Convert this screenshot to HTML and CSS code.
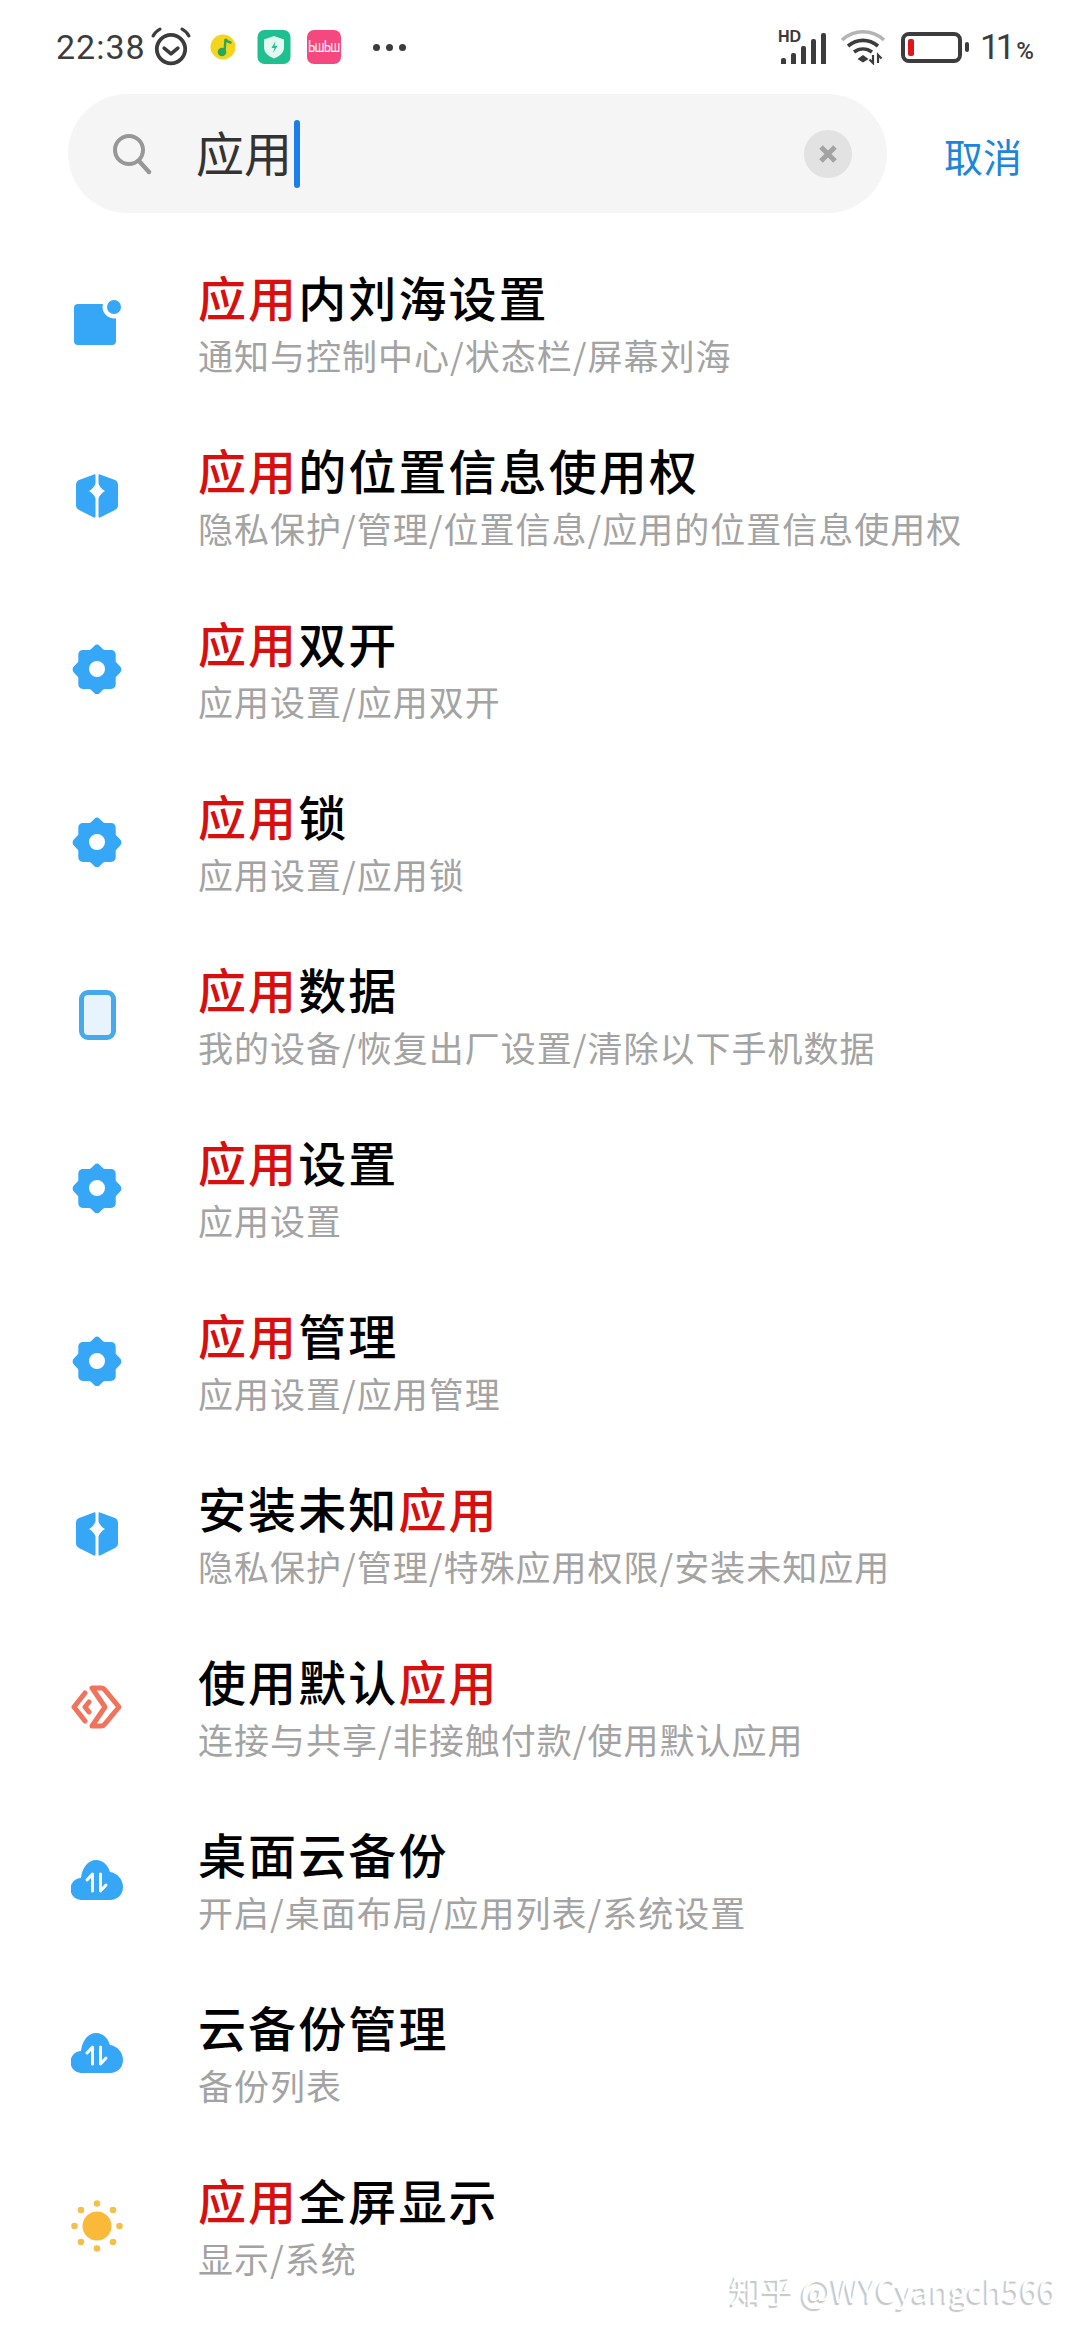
FILE: index.html
```html
<!DOCTYPE html>
<html lang="zh-CN">

<head>
    <meta charset="UTF-8">
    <meta name="viewport" content="width=device-width, initial-scale=1.0">
    <title>设置搜索</title>
    <link rel="stylesheet" href="styles.css">
</head>

<body>
    <svg class="sprites" width="0" height="0">
        <symbol id="icon-gear" viewBox="0 0 50 50">
            <path fill-rule="evenodd" fill="#36a6f7" d="M25 0.5c1 0 1.8 .5 2.5 1.2l3.6 3.6c.5 .5 1 .7 1.7 .7h6.2c2.600 0 4.700 2.100 4.700 4.700v6.200c0 .7 .2 1.200 .7 1.700l3.600 3.600c1.800 1.800 1.800 4.800 0 6.600l-3.600 3.600c-.5 .5-.7 1-.7 1.700v6.200c0 2.600-2.100 4.700-4.700 4.700h-6.200c-.7 0-1.200 .2-1.700 .7l-3.600 3.600c-1.400 1.400-3.600 1.400-5 0l-3.600-3.600c-.5-.5-1-.7-1.700-.7h-6.200c-2.600 0-4.700-2.100-4.700-4.700v-6.200c0-.7-.2-1.200-.7-1.700l-3.600-3.600c-1.800-1.800-1.800-4.800 0-6.600l3.600-3.600c.5-.5 .7-1 .7-1.700v-6.200c0-2.600 2.100-4.700 4.700-4.700h6.200c.7 0 1.200-.2 1.700-.7l3.600-3.600c.7-.7 1.500-1.200 2.500-1.200zM25 17a8 8 0 1 0 0 16a8 8 0 0 0 0-16z" />
        </symbol>
        <symbol id="icon-shield" viewBox="0 0 44 46">
            <path fill="#36a6f7" d="M19 1.500c.8-.4 1.500 0 1.500 1v8c-1 3-3.200 5.500-6.500 7.500c3.300 2 5.500 4.500 6.500 7.500v18c0 1-.7 1.400-1.500 1l-15-7.500c-1.900-1-3-2.600-3-4.700v-20.600c0-2.100 1.100-3.700 3-4.700z" />
            <path fill="#36a6f7" d="M25 1.500c-.8-.4-1.500 0-1.500 1v8c1 3 3.200 5.500 6.500 7.500c-3.300 2-5.500 4.500-6.500 7.500v18c0 1 .7 1.400 1.500 1l15-7.500c1.900-1 3-2.600 3-4.700v-20.600c0-2.100-1.100-3.700-3-4.700z" />
        </symbol>
        <symbol id="icon-cloud" viewBox="0 0 52 40">
            <path fill="#36a6f7" d="M11 40a11 11 0 0 1-1-22C11 8 17 0 25 0C32 0 37 5 39 12C46 13 52 19 52 27C52 35 46 40 39 40z" />
            <path fill="none" stroke="#fff" stroke-width="3" stroke-linecap="round" stroke-linejoin="round" d="M16 20l5.500-6v17M35 25l-5.500 6v-17" />
        </symbol>
    </svg>

    <div class="status-bar">
        <div class="status-left">
            <span class="clock">22:38</span>
            <svg class="ic-alarm" width="40" height="40" viewBox="0 0 38 38">
                <circle cx="19" cy="21" r="13.500" fill="none" stroke="#3c3c3c" stroke-width="3.600" />
                <path d="M12.500 20l6.500 5.500l6.500-5.500" fill="none" stroke="#3c3c3c" stroke-width="3.400" stroke-linecap="round" stroke-linejoin="round" />
                <path d="M2 8.500c1.500-3 3.500-5 6.500-6.500M36 8.500c-1.500-3-3.500-5-6.500-6.500" fill="none" stroke="#3c3c3c" stroke-width="3" stroke-linecap="round" />
            </svg>
            <svg class="ic-music" width="26" height="26" viewBox="0 0 26 26">
                <circle cx="13" cy="13" r="12.500" fill="#f4d51d" />
                <circle cx="12" cy="18" r="4.300" fill="#2aa75c" />
                <path d="M14.500 18l1-13c1 2.500 3 3 5 3.500" fill="none" stroke="#2aa75c" stroke-width="2.400" stroke-linecap="round" />
            </svg>
            <svg class="ic-app" width="34" height="34" viewBox="0 0 33 34">
                <rect width="33" height="34" rx="7" fill="#1fbf8f" />
                <path d="M16.500 6l10 3.500v8c0 5-4 8.500-10 11c-6-2.500-10-6-10-11v-8z" fill="#e3f8f1" />
                <path d="M18 11l-4 7h3l-1.500 5l4.500-7.200h-3z" fill="#1fbf8f" />
            </svg>
            <div class="ic-bili"><span>ЬшЬш</span></div>
            <div class="more-dots"><i></i><i></i><i></i></div>
        </div>
        <div class="status-right">
            <div class="signal">
                <span class="hd">HD</span>
                <div class="bars"><i class="b1"></i><i class="b2"></i><i class="b3"></i><i class="b4"></i><i class="b5"></i></div>
            </div>
            <svg class="ic-wifi" width="46" height="36" viewBox="0 0 46 36">
                <path d="M2 11c12-11 30-11 42 0" fill="none" stroke="#b4b4b4" stroke-width="3.600" />
                <path d="M8 17c9-7.500 21-7.500 30 0" fill="none" stroke="#3c3c3c" stroke-width="3.600" />
                <path d="M14 23c5.500-4 12.500-4 18 0" fill="none" stroke="#3c3c3c" stroke-width="3.600" />
                <path d="M17.500 30l5.500-4l5.500 4l-5.500 3.500z" fill="#3c3c3c" />
                <path d="M33 26v8l-3.500-3.500M38 34v-8l3.500 3.500" fill="none" stroke="#3c3c3c" stroke-width="2.200" />
            </svg>
            <div class="battery"><div class="battery-level"></div></div>
            <div class="battery-tip"></div>
            <span class="battery-num">11<small>%</small></span>
        </div>
    </div>

    <div class="search-row">
        <div class="search-box">
            <svg class="ic-search" width="40" height="44" viewBox="0 0 40 44">
                <circle cx="17" cy="18" r="14" fill="none" stroke="#979797" stroke-width="4" />
                <path d="M27 29l10 11" stroke="#979797" stroke-width="4.400" stroke-linecap="round" />
            </svg>
            <span class="search-text">应用</span>
            <span class="caret"></span>
            <div class="clear-btn">
                <svg width="20" height="20" viewBox="0 0 20 20">
                    <path d="M3 3l14 14M17 3l-14 14" stroke="#a3a3a3" stroke-width="5" />
                </svg>
            </div>
        </div>
        <span class="cancel">取消</span>
    </div>

    <ul class="results">
        <li class="result">
            <div class="result-icon">
                <svg width="47" height="45" viewBox="0 0 47 45">
                    <path fill="#36a6f7" d="M4 4h24.900A11.500 11.500 0 0 0 42 18.300V41a4 4 0 0 1-4 4H4a4 4 0 0 1-4-4V8a4 4 0 0 1 4-4z" />
                    <circle cx="40" cy="7" r="7" fill="#36a6f7" />
                </svg>
            </div>
            <div class="result-text">
                <div class="result-title"><em>应用</em>内刘海设置</div>
                <div class="result-path">通知与控制中心/状态栏/屏幕刘海</div>
            </div>
        </li>
        <li class="result">
            <div class="result-icon"><svg width="44" height="46"><use href="#icon-shield" /></svg></div>
            <div class="result-text">
                <div class="result-title"><em>应用</em>的位置信息使用权</div>
                <div class="result-path">隐私保护/管理/位置信息/应用的位置信息使用权</div>
            </div>
        </li>
        <li class="result">
            <div class="result-icon"><svg width="50" height="50"><use href="#icon-gear" /></svg></div>
            <div class="result-text">
                <div class="result-title"><em>应用</em>双开</div>
                <div class="result-path">应用设置/应用双开</div>
            </div>
        </li>
        <li class="result">
            <div class="result-icon"><svg width="50" height="50"><use href="#icon-gear" /></svg></div>
            <div class="result-text">
                <div class="result-title"><em>应用</em>锁</div>
                <div class="result-path">应用设置/应用锁</div>
            </div>
        </li>
        <li class="result">
            <div class="result-icon"><div class="ic-device"></div></div>
            <div class="result-text">
                <div class="result-title"><em>应用</em>数据</div>
                <div class="result-path">我的设备/恢复出厂设置/清除以下手机数据</div>
            </div>
        </li>
        <li class="result">
            <div class="result-icon"><svg width="50" height="50"><use href="#icon-gear" /></svg></div>
            <div class="result-text">
                <div class="result-title"><em>应用</em>设置</div>
                <div class="result-path">应用设置</div>
            </div>
        </li>
        <li class="result">
            <div class="result-icon"><svg width="50" height="50"><use href="#icon-gear" /></svg></div>
            <div class="result-text">
                <div class="result-title"><em>应用</em>管理</div>
                <div class="result-path">应用设置/应用管理</div>
            </div>
        </li>
        <li class="result">
            <div class="result-icon"><svg width="44" height="46"><use href="#icon-shield" /></svg></div>
            <div class="result-text">
                <div class="result-title">安装未知<em>应用</em></div>
                <div class="result-path">隐私保护/管理/特殊应用权限/安装未知应用</div>
            </div>
        </li>
        <li class="result">
            <div class="result-icon">
                <svg width="52" height="46" viewBox="0 0 52 46">
                    <path d="M21 4h9.500c1.500 0 2.500 .6 3.300 1.800l14.200 17.200l-14.200 17.200c-.8 1.200-1.800 1.800-3.300 1.800h-9.500l13-19l-13-19z" fill="none" stroke="#f2735c" stroke-width="5" stroke-linejoin="round" />
                    <path d="M14 9l-11 14l11 14M18 18l-4 5l4 5" fill="none" stroke="#f2735c" stroke-width="5" stroke-linecap="round" stroke-linejoin="round" />
                </svg>
            </div>
            <div class="result-text">
                <div class="result-title">使用默认<em>应用</em></div>
                <div class="result-path">连接与共享/非接触付款/使用默认应用</div>
            </div>
        </li>
        <li class="result">
            <div class="result-icon"><svg width="52" height="40"><use href="#icon-cloud" /></svg></div>
            <div class="result-text">
                <div class="result-title">桌面云备份</div>
                <div class="result-path">开启/桌面布局/应用列表/系统设置</div>
            </div>
        </li>
        <li class="result">
            <div class="result-icon"><svg width="52" height="40"><use href="#icon-cloud" /></svg></div>
            <div class="result-text">
                <div class="result-title">云备份管理</div>
                <div class="result-path">备份列表</div>
            </div>
        </li>
        <li class="result">
            <div class="result-icon">
                <svg width="52" height="52" viewBox="0 0 52 52">
                    <circle cx="26" cy="26" r="14.500" fill="#fbb93a" />
                    <g fill="#f3c04a">
                        <circle cx="26" cy="3.500" r="3.300" />
                        <circle cx="26" cy="48.500" r="3.300" />
                        <circle cx="3.500" cy="26" r="3.300" />
                        <circle cx="48.500" cy="26" r="3.300" />
                        <circle cx="10" cy="10" r="3.300" />
                        <circle cx="42" cy="10" r="3.300" />
                        <circle cx="10" cy="42" r="3.300" />
                        <circle cx="42" cy="42" r="3.300" />
                    </g>
                </svg>
            </div>
            <div class="result-text">
                <div class="result-title"><em>应用</em>全屏显示</div>
                <div class="result-path">显示/系统</div>
            </div>
        </li>
    </ul>

    <div class="watermark">知乎 @WYCyangch566</div>
</body>

</html>
```

FILE: styles.css
```css
html,
body {
    margin: 0;
    padding: 0;
}

body {
    position: relative;
    width: 1080px;
    height: 2340px;
    overflow: hidden;
    background-color: #fff;
    font-family: "Noto Sans CJK SC", "Noto Sans", sans-serif;
}

.sprites {
    display: block;
    height: 0;
}

/* status bar */
.status-bar {
    display: flex;
    justify-content: space-between;
    align-items: center;
    height: 94px;
    padding: 0 55px 0 56px;
    color: #3c3c3c;
}

.status-left,
.status-right {
    display: flex;
    align-items: center;
}

.clock {
    font-family: Roboto, sans-serif;
    font-size: 34px;
    letter-spacing: 1px;
    line-height: 1;
}

.ic-alarm {
    margin-left: 5px;
}

.ic-music {
    margin-left: 19px;
}

.ic-app {
    margin-left: 21px;
}

.ic-bili {
    display: flex;
    align-items: center;
    justify-content: center;
    width: 34px;
    height: 34px;
    margin-left: 16px;
    border-radius: 7px;
    background-color: #f5487f;
    color: #fff;
    font-family: "DejaVu Sans", sans-serif;
    font-size: 11px;
    letter-spacing: -1px;
    overflow: hidden;
}

.ic-bili span {
    transform: scaleY(1.4);
}

.more-dots {
    display: flex;
    gap: 6px;
    margin-left: 32px;
}

.more-dots i {
    width: 7px;
    height: 7px;
    border-radius: 50%;
    background-color: #3c3c3c;
}

.signal {
    position: relative;
    width: 48px;
    height: 33px;
}

.hd {
    position: absolute;
    left: 0;
    top: -1px;
    font-family: "Liberation Sans", sans-serif;
    font-size: 16px;
    font-weight: bold;
    line-height: 14px;
}

.bars {
    position: absolute;
    inset: 0;
    display: flex;
    align-items: flex-end;
    justify-content: flex-end;
    gap: 4.500px;
}

.bars i {
    width: 5.500px;
    border-radius: 2px 2px 0 0;
    background-color: #3c3c3c;
}

.bars .b1 { height: 6px; }
.bars .b2 { height: 11px; }
.bars .b3 { height: 18px; }
.bars .b4 { height: 25px; }
.bars .b5 { height: 31px; }

.ic-wifi {
    margin-left: 14px;
}

.battery {
    box-sizing: border-box;
    width: 61px;
    height: 31px;
    margin-left: 15px;
    padding: 3px;
    border: 4px solid #3c3c3c;
    border-radius: 8px;
}

.battery-level {
    width: 6px;
    height: 100%;
    border-radius: 2px;
    background-color: #e0161c;
}

.battery-tip {
    width: 4px;
    height: 10px;
    margin-left: 3px;
    border-radius: 2px;
    background-color: #3c3c3c;
}

.battery-num {
    width: 45px;
    margin-left: 11px;
    font-family: Roboto, sans-serif;
    font-size: 35px;
    letter-spacing: -4px;
    line-height: 1;
    white-space: nowrap;
}

.battery-num small {
    margin-left: 5px;
    font-size: 24px;
    font-weight: 500;
    letter-spacing: 0;
}

/* search */
.search-row {
    display: flex;
    align-items: center;
    padding-left: 68px;
}

.search-box {
    display: flex;
    align-items: center;
    box-sizing: border-box;
    width: 819px;
    height: 119px;
    padding: 0 35px 0 44px;
    border-radius: 60px;
    background-color: #f5f5f5;
}

.search-text {
    margin-left: 44px;
    padding-bottom: 5px;
    color: #333;
    font-size: 48px;
    line-height: 1;
}

.caret {
    width: 6px;
    height: 68px;
    margin-left: 2px;
    border-radius: 3px;
    background-color: #1a7fe8;
}

.clear-btn {
    display: flex;
    align-items: center;
    justify-content: center;
    width: 48px;
    height: 48px;
    margin-left: auto;
    border-radius: 50%;
    background-color: #e2e2e2;
}

.cancel {
    margin-left: 57px;
    padding-top: 4px;
    color: #1c86dc;
    font-size: 39px;
    line-height: 1;
}

/* results */
.results {
    list-style: none;
    margin: 23px 0 0;
    padding: 0;
}

.result {
    display: flex;
    align-items: center;
    height: 173px;
}

.result-icon {
    display: flex;
    align-items: center;
    justify-content: center;
    width: 60px;
    height: 60px;
    margin-left: 67px;
}

.result-text {
    margin-left: 71px;
}

.result-title {
    color: #000;
    font-size: 48px;
    font-weight: 500;
    letter-spacing: 2.100px;
    line-height: 62px;
}

.result-title em {
    color: #d70f0f;
    font-style: normal;
}

.result-path {
    margin-top: 3px;
    color: #a3a3a3;
    font-size: 35px;
    letter-spacing: 1px;
    line-height: 50px;
}

.ic-device {
    box-sizing: border-box;
    width: 37px;
    height: 50px;
    border: 5px solid #45a9ec;
    border-radius: 9px;
    background-color: #e8f4fd;
}

/* watermark sits over the list */
.watermark {
    position: absolute;
    right: 24px;
    top: 2267px;
    color: #fff;
    font-size: 32px;
    line-height: 44px;
    text-shadow: -2px 2px 1px #c6c6c6;
    white-space: nowrap;
}
```
